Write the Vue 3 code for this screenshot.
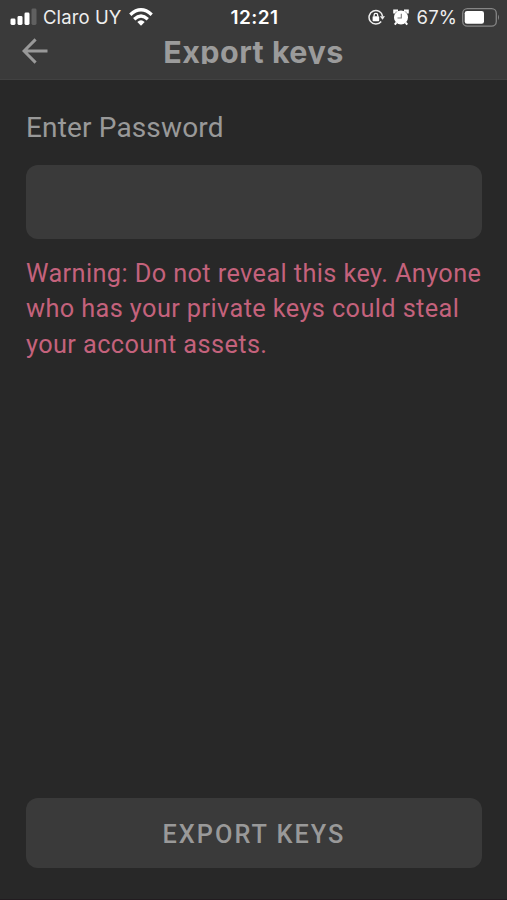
<script setup>
const title = 'Export keys'
const warning = [
  'Warning: Do not reveal this key. Anyone',
  'who has your private keys could steal',
  'your account assets.',
]
</script>

<template>
  <main class="screen">
    <header class="top">
      <div class="status">
        <div class="side left">
          <svg class="signal" width="27" height="18" viewBox="0 0 27 18">
            <rect x="0.5" y="10.5" width="5" height="6.5" rx="1.4" fill="#fff" />
            <rect x="7.5" y="8" width="5" height="9" rx="1.4" fill="#fff" />
            <rect x="14.5" y="4.5" width="5" height="12.5" rx="1.4" fill="#fff" />
            <rect x="21.5" y="0.5" width="5" height="16.5" rx="1.4" fill="#606060" />
          </svg>
          <span class="carrier">Claro UY</span>
          <svg class="wifi" width="24" height="18" viewBox="0 0 24 18" fill="none" stroke="#fff" stroke-width="3.3">
            <path d="M1.3 6.7Q12 -3.1 22.7 6.7" />
            <path d="M5.2 11.2Q12 5 18.8 11.2" />
            <path d="M8.3 14Q12 10.6 15.7 14L12 17.7Z" fill="#fff" stroke="none" />
          </svg>
        </div>
        <span class="time">12:21</span>
        <div class="side right">
          <svg class="lock" width="17" height="17" viewBox="0 0 17 17">
            <path d="M13.2 12.5A6.8 6.8 0 1 1 14.6 7.4" fill="none" stroke="#eee" stroke-width="1.5" />
            <path d="M11.9 7.2H17L14.5 10.7Z" fill="#eee" />
            <rect x="4.6" y="7.2" width="6.6" height="5" rx="0.7" fill="#fff" />
            <path d="M6.1 7.6V6.1a1.8 1.8 0 0 1 3.6 0v1.5" fill="none" stroke="#fff" stroke-width="1.3" />
          </svg>
          <svg class="alarm" width="16" height="17" viewBox="0 0 16 17">
            <circle cx="8" cy="8.5" r="7" fill="#fff" />
            <path d="M1.4 4.6V1.6H5M11 1.6H14.6V4.6" fill="none" stroke="#fff" stroke-width="2.4" />
            <path d="M3.3 13.6L1.8 15.6M12.7 13.6L14.2 15.6" stroke="#fff" stroke-width="2" />
            <path d="M8.3 4.7V9H4.5" fill="none" stroke="#777" stroke-width="1.1" />
          </svg>
          <span class="percent">67%</span>
          <svg class="battery" width="38" height="19" viewBox="0 0 38 19">
            <rect x="0.7" y="0.7" width="33.6" height="17.4" rx="4.7" fill="none" stroke="#858585" stroke-width="1.3" />
            <rect x="2.7" y="3" width="19.3" height="12.8" rx="2.3" fill="#fff" />
            <path d="M36 6.5Q38 9.3 36 12.2Z" fill="#858585" />
          </svg>
        </div>
      </div>
      <div class="nav">
        <svg class="back" width="26" height="26" viewBox="0 0 26 26" fill="none" stroke="#999" stroke-width="3">
          <path d="M25.5 13H2.5M13.6 1.4L2 13L13.6 24.6" />
        </svg>
        <h1>{{ title }}</h1>
      </div>
    </header>

    <form class="body" @submit.prevent>
      <label for="password">Enter Password</label>
      <input id="password" type="password" />
      <p class="warning">
        <span v-for="line in warning" :key="line">{{ line }}</span>
      </p>
      <button type="submit">EXPORT KEYS</button>
    </form>
  </main>
</template>

<style>
body {
  margin: 0;
  background: #282828;
}
</style>

<style scoped>
.screen {
  box-sizing: border-box;
  display: flex;
  flex-direction: column;
  height: 900px;
  background: #282828;
  border-bottom: 1px solid #221c20;
  font-family: Roboto, sans-serif;
}
.top {
  box-sizing: border-box;
  height: 80px;
  background: #3a3a3a;
  border-bottom: 1px solid #414141;
}
.status {
  display: grid;
  grid-template-columns: 1fr auto 1fr;
  align-items: center;
  height: 34px;
  padding: 0 8px 0 10px;
  color: #eee;
  font-family: Inter, sans-serif;
  font-size: 18.5px;
  line-height: 34px;
}
.side {
  display: flex;
  align-items: center;
}
.right {
  justify-content: flex-end;
}
.carrier {
  margin: 0 8px 0 6px;
  letter-spacing: 0.1px;
}
.time {
  padding-top: 1px;
  color: #fff;
  font-size: 19px;
  font-weight: 600;
  line-height: 33px;
  letter-spacing: 0.4px;
}
.alarm {
  margin: 0 8px 0 8px;
}
.percent {
  margin-right: 5px;
  letter-spacing: 0.1px;
}
.battery {
  margin-right: -1px;
}
.nav {
  display: grid;
  grid-template-columns: 60px 1fr 60px;
  height: 30px;
}
.back {
  margin: 4px 0 0 22px;
}
h1 {
  margin: 0;
  height: 30px;
  overflow: hidden;
  color: #9b9b9b;
  font-family: Inter, sans-serif;
  font-size: 30.5px;
  font-weight: 700;
  line-height: 35px;
  letter-spacing: 0.45px;
  text-align: center;
  white-space: nowrap;
}
.body {
  flex: 1;
  display: flex;
  flex-direction: column;
  padding: 31px 25px 31px 26px;
}
label {
  color: #999;
  font-size: 28px;
  line-height: 34px;
  letter-spacing: 0.15px;
}
input {
  box-sizing: border-box;
  width: 100%;
  height: 74px;
  margin: 20px 0 0;
  padding: 0 20px;
  border: 0;
  border-radius: 12px;
  outline: 0;
  background: #3a3a3a;
  color: #999;
  font: inherit;
  font-size: 26px;
}
.warning {
  margin: 17px 0 0;
  color: #c4627c;
  font-size: 25.3px;
  line-height: 35.4px;
  letter-spacing: 0.4px;
}
.warning span {
  display: block;
  white-space: nowrap;
}
button {
  height: 70px;
  margin-top: auto;
  padding: 2px 0 0;
  border: 0;
  border-radius: 12px;
  background: #3a3a3a;
  color: #999;
  font-family: inherit;
  font-size: 25.3px;
  font-weight: 500;
  letter-spacing: 2px;
}
</style>
